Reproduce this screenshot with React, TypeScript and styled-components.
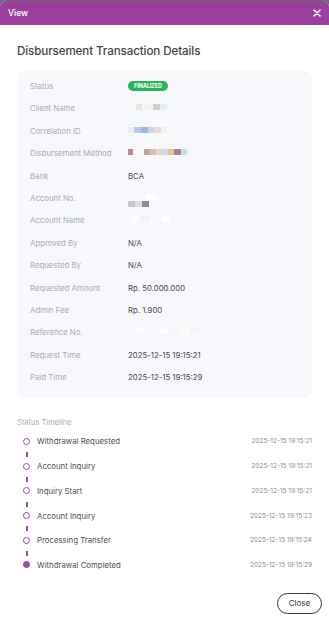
import styled, { createGlobalStyle } from 'styled-components'

const GlobalStyle = createGlobalStyle`
  html, body {
    margin: 0;
    padding: 0;
    background: #6b6b6b;
  }
  body {
    font-family: Inter, 'Noto Sans', sans-serif;
    -webkit-font-smoothing: antialiased;
  }
`

const Modal = styled.div`
  width: 329px;
  height: 625px;
  margin-top: 1px;
  background: #ffffff;
  border-radius: 6px 6px 0 0;
  overflow: hidden;
  display: flex;
  flex-direction: column;
`

const Header = styled.div`
  height: 24px;
  background: #9a3f9d;
  display: flex;
  align-items: center;
  justify-content: space-between;
  padding: 0 8px 0 8px;
  color: #ffffff;
  font-size: 8.5px;
  font-weight: 500;
`

const CloseX = styled.button`
  background: none;
  border: none;
  padding: 0;
  color: #ffffff;
  display: flex;
  cursor: pointer;
`

const Body = styled.div`
  padding: 19px 17px 0 17px;
  display: flex;
  flex-direction: column;
`

const Title = styled.h2`
  margin: 0;
  font-size: 11.6px;
  font-weight: 500;
  color: #444444;
  letter-spacing: -0.1px;
  line-height: 15px;
`

const Card = styled.div`
  margin-top: 12px;
  background: #f7f8fc;
  border-radius: 8px;
  padding: 4px 13px 10px 13px;
  display: flex;
  flex-direction: column;
`

const Row = styled.div`
  display: grid;
  grid-template-columns: 98px 1fr;
  align-items: center;
  min-height: 22.4px;
  font-size: 7.8px;
`

const Label = styled.div`
  color: #a9abb2;
  align-self: start;
  padding-top: 6px;
`

const Value = styled.div`
  color: #484848;
  align-self: start;
  padding-top: 6px;
`

const Badge = styled.span`
  display: inline-block;
  background: #2bb55a;
  color: #ffffff;
  font-size: 5.5px;
  font-weight: 700;
  padding: 2px 6px;
  border-radius: 8px;
  letter-spacing: -0.1px;
`

const Blur = styled.div`
  display: flex;
  height: 6px;
  margin-top: 1px;
`

const Pix = styled.span<{ $c: string; $w: number; $gap?: number }>`
  display: inline-block;
  width: ${p => p.$w}px;
  height: 6px;
  margin-left: ${p => p.$gap ?? 0}px;
  background: ${p => p.$c};
  filter: blur(0.4px);
`

const SectionLabel = styled.div`
  margin-top: 20px;
  font-size: 7.5px;
  color: #a9abb2;
`

const Timeline = styled.div`
  margin-top: 8px;
  display: flex;
  flex-direction: column;
`

const Step = styled.div`
  display: grid;
  grid-template-columns: 20px 1fr auto;
  align-items: center;
  height: 12px;
`

const Dot = styled.span<{ $filled?: boolean }>`
  width: 7px;
  height: 7px;
  margin-left: 6px;
  box-sizing: border-box;
  border-radius: 50%;
  border: 1.2px solid #9a4ba0;
  background: ${p => (p.$filled ? '#9a4ba0' : '#ffffff')};
`

const StepName = styled.span`
  font-size: 7.8px;
  color: #4f4f4f;
`

const StepTime = styled.span`
  font-size: 6.5px;
  color: #8c8c8c;
`

const Connector = styled.div`
  height: 12.7px;
  display: flex;
  align-items: center;
  padding-left: 9px;
  &::before {
    content: '';
    width: 1.5px;
    height: 5px;
    background: #a04aa5;
    margin-top: 2px;
  }
`

const Footer = styled.div`
  display: flex;
  justify-content: flex-end;
  padding: 22px 7px 0 0;
`

const CloseButton = styled.button`
  font-family: inherit;
  font-size: 8px;
  color: #333333;
  background: #ffffff;
  border: 1px solid #333333;
  border-radius: 12px;
  height: 21px;
  width: 45px;
  padding: 0;
`

type Px = [string, number, number?]

const BlurValue = ({ pixels }: { pixels: Px[] }) => (
  <Blur>
    {pixels.map(([c, w, g], i) => (
      <Pix key={i} $c={c} $w={w} $gap={g} />
    ))}
  </Blur>
)

const details: { label: string; value?: string; blur?: Px[] }[] = [
  { label: 'Client Name', blur: [['#f0e4e2', 6, 8], ['#f3eef0', 8, 2], ['#d9cbc7', 7, 1], ['#e6eef8', 7]] },
  { label: 'Correlation ID', blur: [['#eceef3', 6], ['#b5cae6', 7], ['#a3b5d2', 7], ['#c6d4e4', 6], ['#e2ddd7', 7], ['#f5f2ee', 6]] },
  {
    label: 'Disbursement Method',
    blur: [['#b58f8f', 5], ['#c2a39d', 6, 11], ['#d6c1ad', 6], ['#e5dac6', 6], ['#ccd9e6', 6], ['#e0c6a0', 6], ['#a3828c', 7], ['#d0dbec', 6]],
  },
  { label: 'Bank', value: 'BCA' },
]

const details2: { label: string; value?: string; blur?: Px[] }[] = [
  { label: 'Account Name', blur: [['#fbfcfe', 6, 4], ['#eef3fa', 10, 2], ['#f9fafc', 6, 4], ['#ffffff', 8, 2], ['#f6f7fa', 6]] },
  { label: 'Approved By', value: 'N/A' },
  { label: 'Requested By', value: 'N/A' },
  { label: 'Requested Amount', value: 'Rp. 50.000.000' },
  { label: 'Admin Fee', value: 'Rp. 1.900' },
  {
    label: 'Reference No.',
    blur: [['#fbfcfe', 8, 8], ['#f6f8fb', 12], ['#ffffff', 8, 4], ['#f4f6f9', 12], ['#fcfaf6', 10], ['#f2f5f8', 10]],
  },
  { label: 'Request Time', value: '2025-12-15 19:15:21' },
  { label: 'Paid Time', value: '2025-12-15 19:15:29' },
]

const steps = [
  { name: 'Withdrawal Requested', time: '2025-12-15 19:15:21' },
  { name: 'Account Inquiry', time: '2025-12-15 19:15:21' },
  { name: 'Inquiry Start', time: '2025-12-15 19:15:21' },
  { name: 'Account Inquiry', time: '2025-12-15 19:15:23' },
  { name: 'Processing Transfer', time: '2025-12-15 19:15:24' },
  { name: 'Withdrawal Completed', time: '2025-12-15 19:15:29', done: true },
]

const renderRow = (d: { label: string; value?: string; blur?: Px[] }) => (
  <Row key={d.label}>
    <Label>{d.label}</Label>
    {d.blur ? (
      <Value>
        <BlurValue pixels={d.blur} />
      </Value>
    ) : (
      <Value>{d.value}</Value>
    )}
  </Row>
)

const App = () => {
  return (
    <>
      <GlobalStyle />
      <Modal>
        <Header>
          <span>View</span>
          <CloseX aria-label="close">
            <svg width="8" height="8" viewBox="0 0 8 8">
              <path d="M1 1L7 7M7 1L1 7" stroke="#fff" strokeWidth="1.6" strokeLinecap="round" />
            </svg>
          </CloseX>
        </Header>
        <Body>
          <Title>Disbursement Transaction Details</Title>
          <Card>
            <Row>
              <Label>Status</Label>
              <Value style={{ paddingTop: 5 }}>
                <Badge>FINALIZED</Badge>
              </Value>
            </Row>
            {details.map(renderRow)}
            <Row>
              <Label>Account No.</Label>
              <Value>
                <BlurValue pixels={[['#fafafb', 6, 8], ['#ffffff', 6, 4], ['#fcfcfd', 6]]} />
                <BlurValue pixels={[['#c8c8cc', 7], ['#dcdcdf', 7], ['#8c8c90', 7]]} />
              </Value>
            </Row>
            {details2.map(renderRow)}
          </Card>
          <SectionLabel>Status Timeline</SectionLabel>
          <Timeline>
            {steps.map((s, i) => (
              <div key={i}>
                {i > 0 && <Connector />}
                <Step>
                  <Dot $filled={s.done} />
                  <StepName>{s.name}</StepName>
                  <StepTime>{s.time}</StepTime>
                </Step>
              </div>
            ))}
          </Timeline>
        </Body>
        <Footer>
          <CloseButton>Close</CloseButton>
        </Footer>
      </Modal>
    </>
  )
}

export default App
